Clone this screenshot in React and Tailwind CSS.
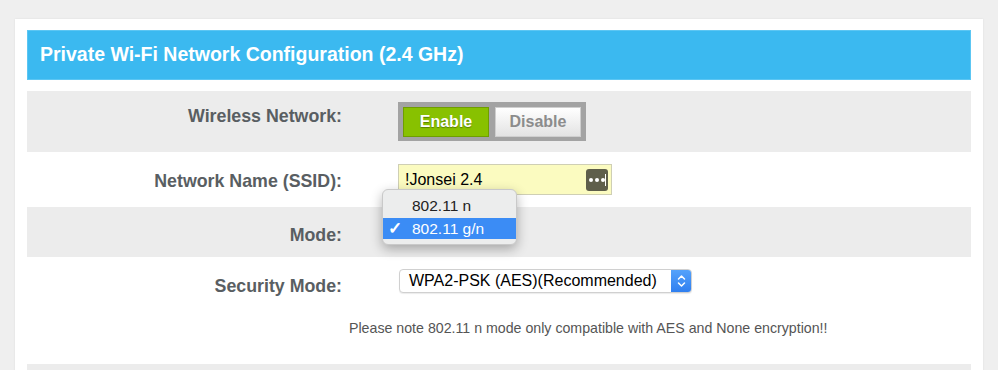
import React from "react";

const font = { fontFamily: '"Liberation Sans", Arial, sans-serif' };

const Label = ({ children, pt }) => (
  <div className={`w-[315px] shrink-0 text-right text-[17.8px] font-bold text-[#595e62] leading-[20px] ${pt}`}>
    {children}
  </div>
);

const App = () => {
  return (
    <div className="min-h-screen w-full bg-[#efefef] pt-[19px] px-[15px] overflow-hidden" style={font}>
      <div className="bg-white px-[12px] pt-[11px] h-[360px] shadow-[0_0_2px_rgba(0,0,0,0.08)]">
        {/* Header */}
        <div className="h-[50px] bg-[#3bb9f0] border border-[#5cc6f3] flex items-center pl-[12px]">
          <h2 className="text-white font-bold text-[19.5px]">
            Private Wi-Fi Network Configuration (2.4 GHz)
          </h2>
        </div>

        <div className="mt-[11px]">
          {/* Wireless Network */}
          <div className="h-[61px] bg-[#ececec] flex">
            <Label pt="pt-[15px]">Wireless Network:</Label>
            <div className="ml-[56px] pt-[11px]">
              <div className="flex h-[39px] w-[188px] bg-[#a3a3a3] p-[5px] gap-[6px]">
                <button className="w-[86px] h-[30px] bg-[#88c100] border border-[#6f9e00] text-white font-bold text-[16px] [text-shadow:0_1px_1px_rgba(0,0,0,0.35)]">
                  Enable
                </button>
                <button className="w-[86px] h-[30px] bg-gradient-to-b from-white to-[#e3e3e3] border border-[#cfcfcf] text-[#8c8c8c] font-bold text-[16px]">
                  Disable
                </button>
              </div>
            </div>
          </div>

          {/* SSID */}
          <div className="h-[55px] bg-white flex">
            <Label pt="pt-[19px]">Network Name (SSID):</Label>
            <div className="ml-[56px] pt-[12px]">
              <div className="w-[214px] h-[31px] bg-[#fbfbc0] border border-[#cfcfb4] flex items-center justify-between pl-[6px] pr-[3px]">
                <span className="text-[16px] text-black">!Jonsei 2.4</span>
                <div className="w-[22px] h-[22px] rounded-[3px] bg-[#5e5e4b] flex items-center justify-center gap-[2px] relative">
                  <span className="w-[4px] h-[4px] rounded-full bg-white"></span>
                  <span className="w-[4px] h-[4px] rounded-full bg-white"></span>
                  <span className="w-[4px] h-[4px] rounded-full bg-white"></span>
                  <span className="absolute right-[2px] top-[5px] w-[1px] h-[12px] bg-white"></span>
                </div>
              </div>
            </div>
          </div>

          {/* Mode */}
          <div className="h-[50px] bg-[#ececec] flex">
            <Label pt="pt-[18px]">Mode:</Label>
            <div className="ml-[56px] relative">
              <div className="absolute left-[-16px] top-[-18px] w-[135px] h-[56px] rounded-[6px] bg-[#eceded] border border-[#c9c9c9] shadow-[0_4px_12px_rgba(0,0,0,0.3)] py-[5px] z-10">
                <div className="h-[22px] flex items-center pl-[29px] text-[15.5px] text-[#222]">802.11 n</div>
                <div className="h-[21px] mt-[1px] flex items-center bg-[#3b8cf5] text-white text-[15.5px]">
                  <span className="w-[29px] pl-[5px] text-[17px] font-bold">✓</span>
                  <span>802.11 g/n</span>
                </div>
              </div>
            </div>
          </div>

          {/* Security Mode */}
          <div className="h-[107px] bg-white flex flex-col">
            <div className="flex">
              <Label pt="pt-[19px]">Security Mode:</Label>
              <div className="ml-[57px] pt-[12px]">
                <div className="w-[293px] h-[24px] rounded-[4px] border border-[#d0d0d0] bg-white flex items-stretch shadow-[0_1px_1px_rgba(0,0,0,0.08)] overflow-hidden">
                  <div className="flex-1 flex items-center pl-[9px] text-[16px] text-black">
                    WPA2-PSK (AES)(Recommended)
                  </div>
                  <div className="w-[20px] bg-gradient-to-b from-[#55a2fb] to-[#2f7ff0] flex items-center justify-center">
                    <svg width="9" height="14" viewBox="0 0 9 14" fill="none" stroke="white" strokeWidth="1.5" strokeLinecap="round" strokeLinejoin="round">
                      <path d="M1.5 5 L4.5 2 L7.5 5" />
                      <path d="M1.5 9 L4.5 12 L7.5 9" />
                    </svg>
                  </div>
                </div>
              </div>
            </div>
            <div className="mt-[22px] pl-[322px] text-[14.2px] text-[#555]">
              Please note 802.11 n mode only compatible with AES and None encryption!!
            </div>
          </div>

          <div className="h-[40px] bg-[#ececec]"></div>
        </div>
      </div>
    </div>
  );
};

export default App;
